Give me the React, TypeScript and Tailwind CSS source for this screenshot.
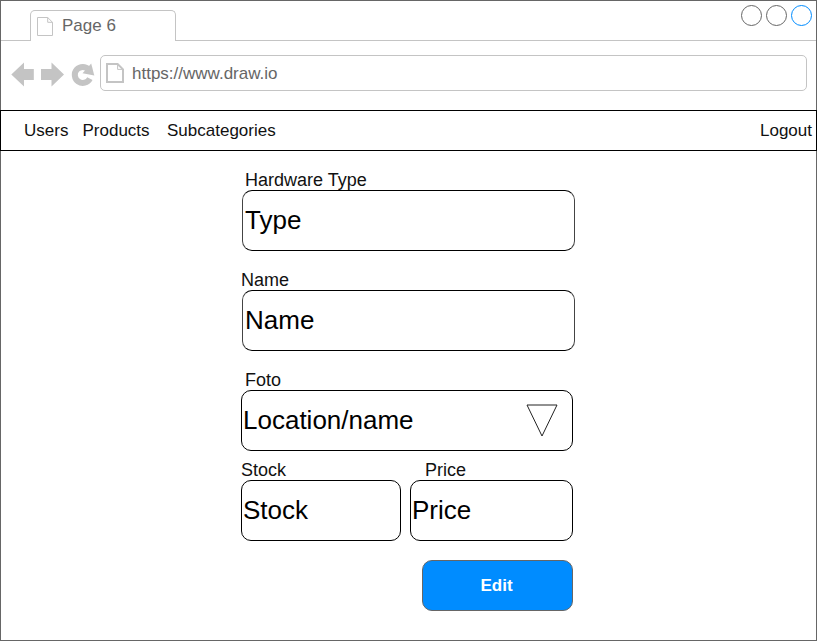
import type { ReactNode } from "react";

function PageIcon({ width, height, stroke }: { width: number; height: number; stroke: number }) {
  const h = stroke / 2;
  const fold = width * 0.3;
  return (
    <svg width={width} height={height} fill="none" stroke="#c4c4c4" strokeWidth={stroke} className="shrink-0">
      <path d={`M${h} ${h}H${width - fold - h}L${width - h} ${fold + h}V${height - h}H${h}Z`} />
      <path d={`M${width - fold - h} ${h}V${fold + h}H${width - h}`} strokeWidth={1} />
    </svg>
  );
}

function Field({
  label,
  value,
  className,
  labelClass,
  boxClass,
  children,
}: {
  label: string;
  value: string;
  className: string;
  labelClass: string;
  boxClass: string;
  children?: ReactNode;
}) {
  return (
    <div className={className}>
      <div className={`h-5 text-[18px] leading-5 whitespace-nowrap text-[#111] ${labelClass}`}>{label}</div>
      <div
        className={`flex h-[61px] items-center justify-between rounded-[10px] border border-black text-[26px] leading-[30px] ${boxClass}`}
      >
        <span className="pb-[2px]">{value}</span>
        {children}
      </div>
    </div>
  );
}

export default function App() {
  return (
    <div className="flex h-[641px] w-[817px] flex-col border border-[#666] bg-white font-['Liberation_Sans',Arial,sans-serif] text-black">
      <header className="flex h-10 shrink-0 items-stretch">
        <div className="w-[29px] border-b border-[#c4c4c4]" />
        <div className="mt-[9px] flex w-[146px] rounded-t-[5px] border border-b-0 border-[#c4c4c4] pt-[6px] pl-[6px] text-[17px] leading-[19px] text-[#666]">
          <PageIcon width={16} height={19} stroke={1} />
          <span className="-mt-px ml-[9px]">Page 6</span>
        </div>
        <div className="flex flex-1 justify-end border-b border-[#c4c4c4] pt-[3px] pr-[3px]">
          <svg width="73" height="23" fill="none" stroke="#666">
            <circle cx="11.5" cy="11.5" r="10" />
            <circle cx="36.5" cy="11.5" r="10" />
            <circle cx="61.5" cy="11.5" r="10" stroke="#008cff" />
          </svg>
        </div>
      </header>

      <div className="flex h-[69px] shrink-0 pt-[14px] pr-[9px] pl-[10px]">
        <svg width="89" height="36" fill="#c4c4c4" className="shrink-0">
          <path d="M0.3 19.5L13 7.5V14H22.8V25H13V31.5Z" />
          <path d="M53 19.5L40.5 7.5V14H30V25H40.5V31.5Z" />
          <path d="M78.9 23.6A8 8 0 1 1 77.8 14.6" fill="none" stroke="#c4c4c4" strokeWidth="6" />
          <path d="M80.2 8.5L83.3 20.4L71.5 18.2Z" />
        </svg>
        <div className="flex h-9 flex-1 items-center rounded-[5px] border border-[#c4c4c4] pl-[5px] text-[17px] leading-5 text-[#666]">
          <PageIcon width={18} height={20} stroke={2} />
          <span className="ml-[8px] pt-[2px]">https://www.draw.io</span>
        </div>
      </div>

      <nav className="-mx-px flex h-[41px] shrink-0 items-center border border-black pr-[4px] pl-[23px] text-[17px] leading-5 text-[#111]">
        <span className="w-[58.5px]">Users</span>
        <span className="w-[84.500px]">Products</span>
        <span>Subcategories</span>
        <span className="ml-auto">Logout</span>
      </nav>

      <main className="ml-[240px] w-[334px] pt-[19px]">
        <Field
          label="Hardware Type"
          value="Type"
          className="mb-[19px] h-[81px]"
          labelClass="pl-1"
          boxClass="ml-px w-[333px] border-x-[#444] pl-[2px]"
        />
        <Field
          label="Name"
          value="Name"
          className="mb-[19px] h-[81px]"
          labelClass=""
          boxClass="ml-px w-[333px] border-x-[#444] pl-[2px]"
        />
        <Field label="Foto" value="Location/name" className="mb-[9px] h-[81px]" labelClass="pl-1" boxClass="w-[332px] pr-[14px] pl-px">
          <svg width="32" height="34" fill="none" stroke="#222" strokeWidth="1">
            <path d="M1 1H31L16 32Z" />
          </svg>
        </Field>
        <div className="flex gap-[9px]">
          <Field label="Stock" value="Stock" className="w-[160px]" labelClass="" boxClass="pl-px" />
          <Field label="Price" value="Price" className="w-[163px]" labelClass="pl-[15px]" boxClass="pl-px" />
        </div>
        <button className="mt-[19px] ml-[181px] block h-[51px] w-[151px] rounded-[10px] border border-[#666] bg-[#008cff] pr-[2px] text-[17px] leading-5 font-bold text-white">
          Edit
        </button>
      </main>
    </div>
  );
}
